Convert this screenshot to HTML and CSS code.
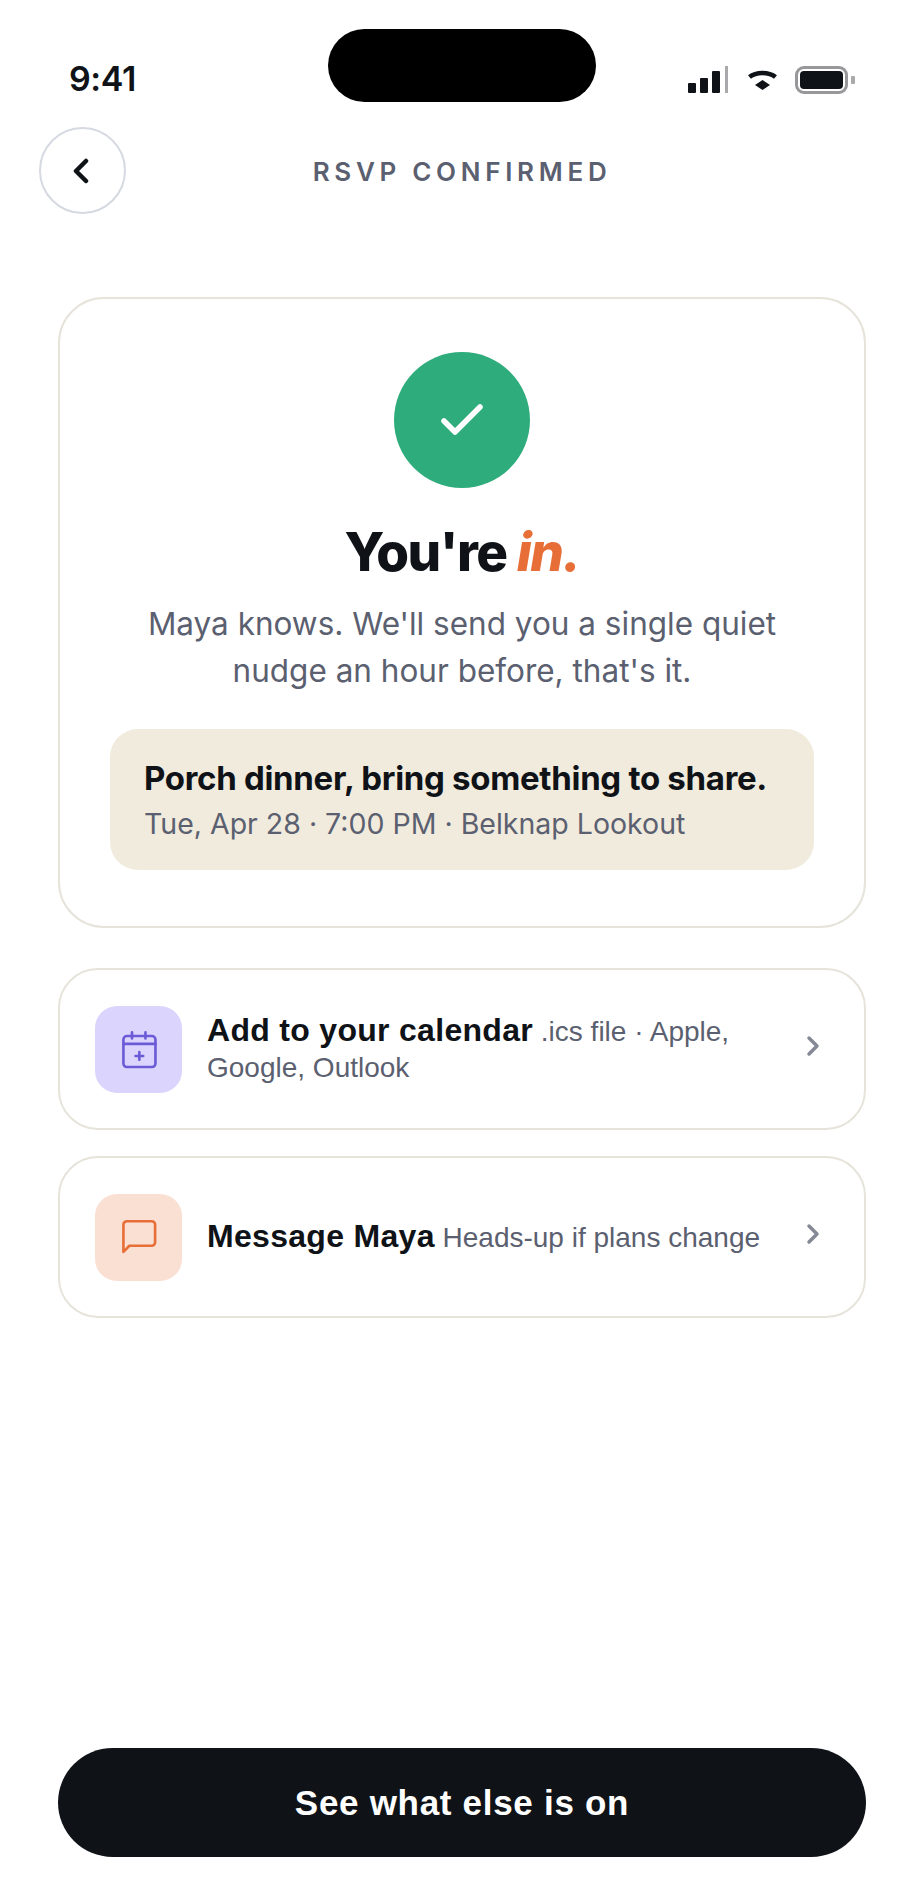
FILE: index.html
```html
<!DOCTYPE html>
<html>
<head>
    <title>RSVP Confirmed</title>
    <link rel="stylesheet" href="styles.css">
</head>
<body>
    <div class="screen">
        <div class="island"></div>
        <div class="status-bar">
            <span class="time">9:41</span>
            <div class="status-icons">
                <svg class="signal" width="40" height="27" viewBox="0 0 40 27">
                    <rect x="0" y="17" width="8" height="10" rx="1" fill="#0f1318"/>
                    <rect x="12" y="12" width="8" height="15" rx="1" fill="#0f1318"/>
                    <rect x="24" y="5" width="8" height="22" rx="1" fill="#0f1318"/>
                    <rect x="37" y="0" width="3" height="27" fill="#a9a9ab"/>
                </svg>
                <svg width="29" height="20" viewBox="0 0 29 20">
                    <path d="M1.500 7 C8 1.500 21 1.500 27.500 7" fill="none" stroke="#0f1318" stroke-width="4.500"/>
                    <path d="M7 15 L14.500 10 L22 15 L14.500 20 Z" fill="#0f1318"/>
                </svg>
                <div class="battery">
                    <div class="battery-body"><div class="battery-fill"></div></div>
                    <div class="battery-cap"></div>
                </div>
            </div>
        </div>

        <div class="top-bar">
            <button class="back-btn">
                <svg width="20" height="28" viewBox="0 0 20 28" fill="none" stroke="#0f1318" stroke-width="4.500" stroke-linecap="round" stroke-linejoin="round">
                    <path d="M13 4 L3 14 L13 24"/>
                </svg>
            </button>
            <div class="top-title">RSVP CONFIRMED</div>
        </div>

        <div class="content">
            <div class="card">
                <div class="check-circle">
                    <svg width="50" height="50" viewBox="0 0 50 50" fill="none" stroke="#fff" stroke-width="5.500" stroke-linecap="round" stroke-linejoin="round">
                        <path d="M7 26 L18 37 L43 12"/>
                    </svg>
                </div>
                <h1>You're <em>in.</em></h1>
                <p class="lead">Maya knows. We'll send you a single quiet nudge an hour before, that's it.</p>
                <div class="event">
                    <div class="event-name">Porch dinner, bring something to share.</div>
                    <div class="event-meta">Tue, Apr 28 · 7:00 PM · Belknap Lookout</div>
                </div>
            </div>

            <button class="row">
                <span class="tile tile-purple">
                    <svg width="42" height="42" viewBox="0 0 24 24" fill="none" stroke="#6b5bd6" stroke-width="1.500" stroke-linecap="round" stroke-linejoin="round">
                        <rect x="3.100" y="4.600" width="18.300" height="17.700" rx="2"/>
                        <path d="M3.100 9.100 H21.400 M8 2.400 V6 M15.700 2.400 V6 M12.200 13.800 V18.200 M10 16 H14.400"/>
                    </svg>
                </span>
                <span class="row-text"><b>Add to your calendar</b> <small>.ics file · Apple, Google, Outlook</small></span>
                <svg class="chevron" width="16" height="24" viewBox="0 0 16 24" fill="none" stroke="#858895" stroke-width="3.500" stroke-linecap="round" stroke-linejoin="round">
                    <path d="M4 4 L12 12 L4 20"/>
                </svg>
            </button>

            <button class="row">
                <span class="tile tile-orange">
                    <svg width="42" height="42" viewBox="0 0 24 24" fill="none" stroke="#e76f37" stroke-width="1.500" stroke-linecap="round" stroke-linejoin="round">
                        <path d="M21.200 15 a2 2 0 0 1 -2 2 H6.500 L3.100 20.500 V5 a2 2 0 0 1 2 -2 H19.200 a2 2 0 0 1 2 2 Z"/>
                    </svg>
                </span>
                <span class="row-text"><b>Message Maya</b> <small>Heads-up if plans change</small></span>
                <svg class="chevron" width="16" height="24" viewBox="0 0 16 24" fill="none" stroke="#858895" stroke-width="3.500" stroke-linecap="round" stroke-linejoin="round">
                    <path d="M4 4 L12 12 L4 20"/>
                </svg>
            </button>
        </div>

        <div class="footer">
            <button class="cta">See what else is on</button>
        </div>
    </div>
</body>
</html>
```
FILE: styles.css
```css
html, body {
    margin: 0;
    padding: 0;
    background-color: #fff;
}
body {
    font-family: 'Inter', sans-serif;
    color: #0f1318;
}
button {
    font-family: 'Liberation Sans', sans-serif;
    color: inherit;
    background: none;
    cursor: pointer;
}
.screen {
    position: relative;
    display: flex;
    flex-direction: column;
    width: 924px;
    height: 1897px;
    overflow: hidden;
}
.island {
    position: absolute;
    top: 29px;
    left: 328px;
    width: 268px;
    height: 73px;
    border-radius: 37px;
    background-color: #000;
}
.status-bar {
    display: flex;
    align-items: center;
    justify-content: space-between;
    padding: 60px 69px 0 69px;
    height: 39px;
}
.time {
    margin-top: -2px;
    font-size: 34px;
    font-weight: 600;
    letter-spacing: -0.400px;
}
.status-icons {
    display: flex;
    align-items: center;
    gap: 18px;
}
.signal {
    margin-right: 2px;
}
.battery {
    display: flex;
    align-items: center;
    gap: 3px;
}
.battery-body {
    box-sizing: border-box;
    width: 53px;
    height: 28px;
    padding: 2px;
    border: 3px solid #98989b;
    border-radius: 9px;
}
.battery-fill {
    width: 100%;
    height: 100%;
    border-radius: 4px;
    background-color: #0f1318;
}
.battery-cap {
    width: 4px;
    height: 8px;
    border-radius: 1px;
    background-color: #a9a9ab;
}
.top-bar {
    position: relative;
    display: flex;
    align-items: center;
    justify-content: center;
    margin-top: 28px;
    padding: 0 40px;
    height: 87px;
}
.back-btn {
    position: absolute;
    left: 39px;
    top: 0;
    display: flex;
    align-items: center;
    justify-content: center;
    width: 87px;
    height: 87px;
    padding: 0;
    border: 2.500px solid #d6d9e1;
    border-radius: 50%;
}
.top-title {
    padding-top: 2px;
    font-size: 26px;
    font-weight: 600;
    letter-spacing: 4.700px;
    color: #5b6070;
}
.content {
    display: flex;
    flex-direction: column;
    padding: 83px 58px 0;
}
.card {
    display: flex;
    flex-direction: column;
    align-items: center;
    padding: 53px 50px 56px;
    border: 2px solid #e6e4da;
    border-radius: 46px;
    margin-bottom: 40px;
}
.check-circle {
    display: flex;
    align-items: center;
    justify-content: center;
    width: 136px;
    height: 136px;
    border-radius: 50%;
    background-color: #2fac7c;
}
h1 {
    margin: 31px 0 0;
    font-size: 53px;
    line-height: 66px;
    font-weight: 800;
    letter-spacing: -1.500px;
}
h1 em {
    color: #e76f37;
}
.lead {
    margin: 16px 0 0;
    font-size: 31.500px;
    line-height: 46.500px;
    text-align: center;
    color: #5b6070;
}
.event {
    align-self: stretch;
    margin-top: 35px;
    padding: 29px 34px 28px;
    border-radius: 28px;
    background-color: #f1ebdd;
}
.event-name {
    font-size: 33px;
    line-height: 40px;
    font-weight: 700;
    letter-spacing: -0.300px;
    white-space: nowrap;
}
.event-meta {
    margin-top: 7px;
    margin-bottom: -1px;
    font-size: 28.500px;
    line-height: 38px;
    color: #5b6070;
}
.row {
    display: flex;
    align-items: center;
    gap: 25px;
    width: 100%;
    height: 162px;
    margin-bottom: 26px;
    padding: 0 35px;
    border: 2px solid #e6e4da;
    border-radius: 40px;
    text-align: left;
}
.tile {
    flex: none;
    display: flex;
    align-items: center;
    justify-content: center;
    width: 87px;
    height: 87px;
    border-radius: 22px;
}
.tile-purple {
    background-color: #dbd5fd;
}
.tile-orange {
    background-color: #fadfd3;
}
.row-text {
    flex: 1;
    font-size: 28px;
    line-height: 36px;
    color: #5b6070;
}
.row-text b {
    font-size: 32px;
    letter-spacing: 0.300px;
    color: #0f1318;
}
.row-text small {
    font-size: 28px;
}
.chevron {
    flex: none;
    margin: 0 8px 7px 0;
}
.footer {
    margin-top: auto;
    padding: 0 58px 40px;
}
.cta {
    display: block;
    width: 100%;
    height: 109px;
    border: none;
    border-radius: 55px;
    background-color: #0f1318;
    color: #fff;
    font-size: 35px;
    font-weight: 700;
    letter-spacing: 0.700px;
}
```
